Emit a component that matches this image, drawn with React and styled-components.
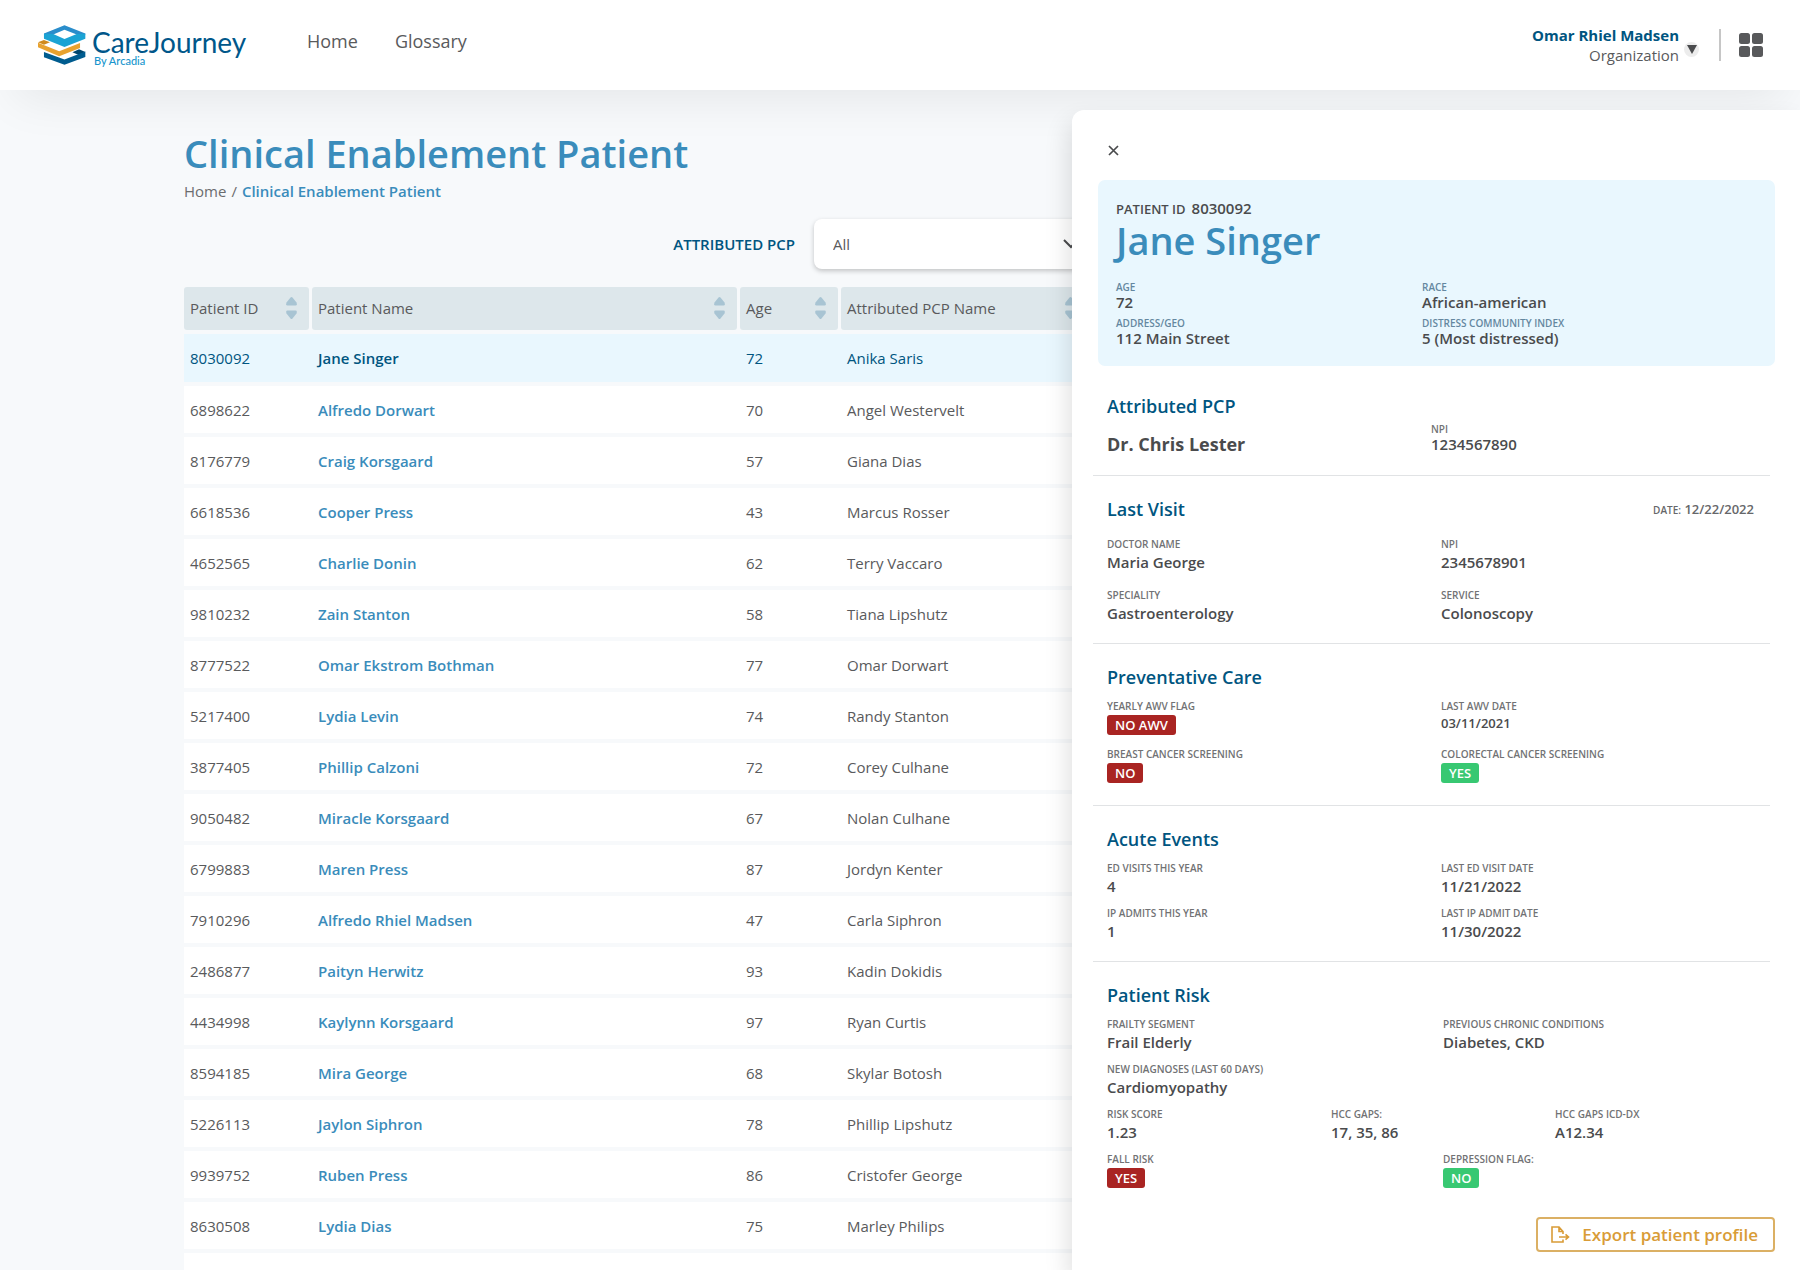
import React from "react";
import styled, { createGlobalStyle } from "styled-components";

const blue = "#3a8cbb";
const navy = "#005580";
const ink = "#4a4b4d";
const soft = "#595a5c";

const GlobalStyle = createGlobalStyle`
  *, *::before, *::after { box-sizing: border-box; }
  body { margin: 0; background: #f7f9fb; font-family: "Open Sans", "Noto Sans", sans-serif; color: ${soft}; }
  button, select { font: inherit; color: inherit; }
  h1, h2, h3, p, dl, dd { margin: 0; }
  a { color: inherit; text-decoration: none; }
`;

const Shell = styled.div`
  position: relative;
  height: 100vh;
  overflow: hidden;
  display: flex;
  flex-direction: column;
`;

const TopBar = styled.header`
  flex: none;
  height: 90px;
  padding: 0 37px 0 38px;
  display: flex;
  align-items: center;
  background: #fff;
  box-shadow: 0 24px 48px -16px rgba(0, 0, 0, 0.08);
`;

const Brand = styled.a`
  width: 212px;
  display: flex;
  align-items: center;
  gap: 6px;
`;

const BrandText = styled.span`
  padding-top: 5px;
  display: flex;
  flex-direction: column;
  font-family: Lato, sans-serif;
`;

const BrandName = styled.span`
  font-size: 28px;
  line-height: 26px;
  color: #00578a;
`;

const BrandBy = styled.span`
  padding-left: 2px;
  font-size: 11px;
  line-height: 12px;
  font-weight: 500;
  color: #1795cd;
`;

const Nav = styled.nav`
  flex: 1;
  padding: 0 0 8px 57px;
  display: flex;
  gap: 37px;
  font-size: 18px;
  line-height: 24px;
`;

const Account = styled.div`
  display: flex;
  align-items: center;
`;

const AccountText = styled.div`
  text-align: right;
  font-size: 15px;
  line-height: 20px;
`;

const AccountName = styled.div`
  font-weight: 700;
  color: ${navy};
`;

const AccountToggle = styled.button`
  width: 15px;
  height: 15px;
  margin: 8px 20px 0 5px;
  padding: 0;
  display: grid;
  place-items: center;
  border: 0;
  border-radius: 50%;
  background: #ececec;
`;

const AppsButton = styled.button`
  height: 32px;
  padding: 0 0 0 18px;
  display: flex;
  align-items: center;
  border: 0;
  border-left: 2px solid #c6c6c6;
  background: none;
`;

const Main = styled.main`
  padding: 39px 709px 0 184px;
`;

const PageTitle = styled.h1`
  font-size: 38px;
  line-height: 48px;
  font-weight: 600;
  color: ${blue};
`;

const Crumbs = styled.nav`
  display: flex;
  gap: 5px;
  font-size: 15px;
  line-height: 28px;
  color: #6b6c6e;
`;

const CrumbCurrent = styled.a`
  font-weight: 600;
  color: ${blue};
`;

const Filters = styled.div`
  padding: 14px 0;
  display: flex;
  justify-content: flex-end;
  align-items: center;
  gap: 19px;
`;

const FilterLabel = styled.label`
  font-size: 15px;
  line-height: 20px;
  font-weight: 600;
  color: ${navy};
`;

const SelectBox = styled.div`
  position: relative;
  svg {
    position: absolute;
    right: 12px;
    top: 20px;
    pointer-events: none;
  }
`;

const Select = styled.select`
  width: 277px;
  height: 50px;
  padding: 0 19px;
  appearance: none;
  border: 0;
  border-radius: 8px;
  background: #fff;
  box-shadow: 0 2px 5px rgba(0, 0, 0, 0.22);
  font-size: 15px;
`;

const Table = styled.table`
  width: 100%;
  table-layout: fixed;
  border-collapse: separate;
  border-spacing: 0 4px;
  font-size: 15px;
  line-height: 20px;
`;

const HeadCell = styled.th`
  width: ${(p) => p.$width || "auto"};
  padding: 0 3px 0 0;
  text-align: left;
  font-weight: 400;
`;

const SortButton = styled.button`
  width: 100%;
  height: 43px;
  padding: 0 12px 1px 6px;
  display: flex;
  align-items: center;
  justify-content: space-between;
  border: 0;
  border-radius: 3px;
  background: #dde7eb;
`;

const Row = styled.tr`
  height: ${(p) => (p.$active ? "48px" : "47px")};
  background: ${(p) => (p.$active ? "#e9f7fe" : "#fff")};
  color: ${(p) => (p.$active ? navy : "inherit")};
`;

const Cell = styled.td`
  padding: 0 6px;
`;

const PatientLink = styled.a`
  font-weight: 600;
  color: ${(p) => (p.$active ? navy : blue)};
`;

const Drawer = styled.aside`
  position: absolute;
  top: 110px;
  right: 0;
  bottom: 0;
  width: 728px;
  padding: 28px 25px 0 21px;
  background: #fff;
  border-radius: 12px 0 0 0;
  box-shadow: -4px 12px 24px rgba(0, 0, 0, 0.12);
`;

const CloseButton = styled.button`
  width: 24px;
  height: 24px;
  margin: 0 0 18px 8px;
  padding: 0;
  display: grid;
  place-items: center;
  border: 0;
  background: none;
`;

const Summary = styled.section`
  margin-left: 5px;
  padding: 18px 18px 19px;
  border-radius: 7px;
  background: #e9f7fe;
`;

const PatientId = styled.p`
  font-size: 15px;
  line-height: 21px;
  font-weight: 600;
  color: ${ink};
  small { margin-right: 6px; font-size: 13px; }
`;

const PatientName = styled.h2`
  font-size: 38px;
  line-height: 40px;
  font-weight: 600;
  color: ${blue};
`;

const SummaryGrid = styled.dl`
  padding-top: 20px;
  display: grid;
  grid-template-columns: 306px 1fr;
  row-gap: 5px;
`;

const Section = styled.section`
  padding: 21px 0 18px 14px;
`;

const LeadSection = styled(Section)`
  padding-top: 28px;
  padding-bottom: 22px;
`;

const FlagSection = styled(Section)`
  padding-bottom: 22px;
`;

const LastSection = styled(Section)`
  padding-bottom: 0;
`;

const SectionHead = styled.div`
  padding-right: 20px;
  display: flex;
  justify-content: space-between;
  align-items: center;
`;

const SectionTitle = styled.h3`
  font-size: 18px;
  line-height: 24px;
  font-weight: 600;
  color: ${navy};
`;

const Divider = styled.hr`
  height: 1px;
  margin: 0 5px 0 0;
  border: 0;
  background: #e1e3e5;
`;

const Fields = styled.dl`
  padding-top: ${(p) => p.$top || "10px"};
  display: grid;
  grid-template-columns: ${(p) => p.$cols || "1fr 1fr"};
  column-gap: ${(p) => p.$gap || "0"};
  row-gap: ${(p) => p.$rows || "8px"};
`;

const Term = styled.dt`
  font-size: 10px;
  line-height: 14px;
  font-weight: 600;
  color: ${(p) => (p.$tint ? "#6487a0" : "#717274")};
`;

const Value = styled.dd`
  font-size: 15px;
  line-height: ${(p) => (p.$tight ? "17px" : "23px")};
  font-weight: 600;
  color: ${ink};
`;

const DateValue = styled.dd`
  font-size: 13px;
  line-height: 20px;
  font-weight: 600;
  color: ${ink};
`;

const DoctorName = styled.p`
  align-self: end;
  font-size: 18px;
  line-height: 18px;
  font-weight: 700;
  color: ${ink};
`;

const LeadFields = styled.div`
  padding-top: 4px;
  display: grid;
  grid-template-columns: 324px 1fr;
`;

const VisitDate = styled.p`
  padding-right: 1px;
  font-size: 13px;
  line-height: 20px;
  font-weight: 600;
  color: #66676a;
  small { font-size: 10px; }
`;

const BadgeValue = styled.dd`
  padding-top: 2px;
  display: flex;
`;

const Badge = styled.span`
  padding: 0 8px;
  border-radius: 3px;
  background: ${(p) => (p.$good ? "#38c872" : "#a92422")};
  color: #fff;
  font-size: 13px;
  line-height: 20px;
  font-weight: 600;
`;

const DrawerFoot = styled.div`
  padding-top: 29px;
  display: flex;
  justify-content: flex-end;
`;

const ExportButton = styled.button`
  height: 35px;
  padding: 0 15px 0 13px;
  display: flex;
  align-items: center;
  gap: 12px;
  border: 2px solid #dbb064;
  border-radius: 4px;
  background: #fff;
  color: #d99c37;
  font-size: 17px;
  font-weight: 600;
`;

const LogoMark = () => (
  <svg width="48" height="40" viewBox="0 0 145 120" aria-hidden="true">
    <path d="M0 52 18 45 36 52 18 59Z" fill="#cf8a1d" />
    <path d="M104 82 124 73 143 81 123 90Z" fill="#00476f" />
    <path d="M18 81 80 104 143 80V96L80 120 18 97Z" fill="#005c8f" />
    <path d="M0 53 64 79 127 54V69L64 94 0 67Z" fill="#e8a22f" />
    <path d="M18 25 80 0 143 25V28H117L80 14 46 28H18Z" fill="#2a8dcb" />
    <path d="M18 26 46 27 80 42 117 27 143 26V41L80 66 18 41Z" fill="#1ba3d4" />
  </svg>
);

const SortIcon = () => (
  <svg width="11" height="22" viewBox="0 0 11 22" aria-hidden="true">
    <path d="M4.500 .6Q5.500 -.4 6.500 .6L10.500 5.500Q11.500 8.500 9.500 8.500H1.500Q-.5 8.500 .5 5.500Z" fill="#a8c4d3" />
    <path d="M4.500 21.400Q5.500 22.400 6.500 21.400L10.500 16.500Q11.500 13.500 9.500 13.500H1.500Q-.5 13.500 .5 16.500Z" fill="#a8c4d3" />
  </svg>
);

const patients = [
  ["8030092", "Jane Singer", "72", "Anika Saris"],
  ["6898622", "Alfredo Dorwart", "70", "Angel Westervelt"],
  ["8176779", "Craig Korsgaard", "57", "Giana Dias"],
  ["6618536", "Cooper Press", "43", "Marcus Rosser"],
  ["4652565", "Charlie Donin", "62", "Terry Vaccaro"],
  ["9810232", "Zain Stanton", "58", "Tiana Lipshutz"],
  ["8777522", "Omar Ekstrom Bothman", "77", "Omar Dorwart"],
  ["5217400", "Lydia Levin", "74", "Randy Stanton"],
  ["3877405", "Phillip Calzoni", "72", "Corey Culhane"],
  ["9050482", "Miracle Korsgaard", "67", "Nolan Culhane"],
  ["6799883", "Maren Press", "87", "Jordyn Kenter"],
  ["7910296", "Alfredo Rhiel Madsen", "47", "Carla Siphron"],
  ["2486877", "Paityn Herwitz", "93", "Kadin Dokidis"],
  ["4434998", "Kaylynn Korsgaard", "97", "Ryan Curtis"],
  ["8594185", "Mira George", "68", "Skylar Botosh"],
  ["5226113", "Jaylon Siphron", "78", "Phillip Lipshutz"],
  ["9939752", "Ruben Press", "86", "Cristofer George"],
  ["8630508", "Lydia Dias", "75", "Marley Philips"],
];

const columns = [
  ["Patient ID", "128px"],
  ["Patient Name", null],
  ["Age", "101px"],
  ["Attributed PCP Name", "250px"],
];

const Field = ({ label, tint, tight, children }) => (
  <div>
    <Term $tint={tint}>{label}</Term>
    <Value $tight={tight}>{children}</Value>
  </div>
);

const Flag = ({ label, good, children }) => (
  <div>
    <Term>{label}</Term>
    <BadgeValue><Badge $good={good}>{children}</Badge></BadgeValue>
  </div>
);

export default function App() {
  return (
    <Shell>
      <GlobalStyle />
      <TopBar>
        <Brand href="#home">
          <LogoMark />
          <BrandText>
            <BrandName>CareJourney</BrandName>
            <BrandBy>By Arcadia</BrandBy>
          </BrandText>
        </Brand>
        <Nav>
          <a href="#home">Home</a>
          <a href="#glossary">Glossary</a>
        </Nav>
        <Account>
          <AccountText>
            <AccountName>Omar Rhiel Madsen</AccountName>
            Organization
          </AccountText>
          <AccountToggle aria-label="Account menu">
            <svg width="10" height="9" viewBox="0 0 10 9"><path d="M0 0H10L5 9Z" fill={ink} /></svg>
          </AccountToggle>
          <AppsButton aria-label="Apps">
            <svg width="24" height="24" viewBox="0 0 24 24" fill="#58595b">
              <rect width="11" height="11" rx="2.500" />
              <rect x="13" width="11" height="11" rx="2.500" />
              <rect y="13" width="11" height="11" rx="2.500" />
              <rect x="13" y="13" width="11" height="11" rx="2.500" />
            </svg>
          </AppsButton>
        </Account>
      </TopBar>

      <Main>
        <PageTitle>Clinical Enablement Patient</PageTitle>
        <Crumbs aria-label="Breadcrumb">
          <a href="#home">Home</a>
          <span>/</span>
          <CrumbCurrent href="#patient">Clinical Enablement Patient</CrumbCurrent>
        </Crumbs>
        <Filters>
          <FilterLabel htmlFor="pcp">ATTRIBUTED PCP</FilterLabel>
          <SelectBox>
            <Select id="pcp" defaultValue="All">
              <option>All</option>
            </Select>
            <svg width="16" height="10" viewBox="0 0 16 10" fill="none" stroke={ink} strokeWidth="2">
              <path d="M1 1 8 8 15 1" />
            </svg>
          </SelectBox>
        </Filters>
        <Table>
          <thead>
            <tr>
              {columns.map(([name, width]) => (
                <HeadCell key={name} $width={width} scope="col">
                  <SortButton>{name}<SortIcon /></SortButton>
                </HeadCell>
              ))}
            </tr>
          </thead>
          <tbody>
            {patients.map(([id, name, age, pcp], i) => (
              <Row key={id} $active={i === 0}>
                <Cell>{id}</Cell>
                <Cell><PatientLink href={"#" + id} $active={i === 0}>{name}</PatientLink></Cell>
                <Cell>{age}</Cell>
                <Cell>{pcp}</Cell>
              </Row>
            ))}
            <Row><Cell colSpan={4} /></Row>
          </tbody>
        </Table>
      </Main>

      <Drawer aria-label="Patient profile">
        <CloseButton aria-label="Close">
          <svg width="11" height="11" viewBox="0 0 11 11" stroke={ink} strokeWidth="1.700">
            <path d="M1 1 10 10M10 1 1 10" />
          </svg>
        </CloseButton>
        <Summary>
          <PatientId><small>PATIENT ID</small>8030092</PatientId>
          <PatientName>Jane Singer</PatientName>
          <SummaryGrid>
            <Field tint tight label="AGE">72</Field>
            <Field tint tight label="RACE">African-american</Field>
            <Field tint tight label="ADDRESS/GEO">112 Main Street</Field>
            <Field tint tight label="DISTRESS COMMUNITY INDEX">5 (Most distressed)</Field>
          </SummaryGrid>
        </Summary>

        <LeadSection>
          <SectionTitle>Attributed PCP</SectionTitle>
          <LeadFields>
            <DoctorName>Dr. Chris Lester</DoctorName>
            <dl><Field tight label="NPI">1234567890</Field></dl>
          </LeadFields>
        </LeadSection>
        <Divider />
        <Section>
          <SectionHead>
            <SectionTitle>Last Visit</SectionTitle>
            <VisitDate><small>DATE:</small> 12/22/2022</VisitDate>
          </SectionHead>
          <Fields $top="16px" $rows="14px">
            <Field label="DOCTOR NAME">Maria George</Field>
            <Field label="NPI">2345678901</Field>
            <Field label="SPECIALITY">Gastroenterology</Field>
            <Field label="SERVICE">Colonoscopy</Field>
          </Fields>
        </Section>
        <Divider />
        <FlagSection>
          <SectionTitle>Preventative Care</SectionTitle>
          <Fields $rows="12px">
            <Flag label="YEARLY AWV FLAG">NO AWV</Flag>
            <div>
              <Term>LAST AWV DATE</Term>
              <DateValue>03/11/2021</DateValue>
            </div>
            <Flag label="BREAST CANCER SCREENING">NO</Flag>
            <Flag good label="COLORECTAL CANCER SCREENING">YES</Flag>
          </Fields>
        </FlagSection>
        <Divider />
        <Section>
          <SectionTitle>Acute Events</SectionTitle>
          <Fields>
            <Field label="ED VISITS THIS YEAR">4</Field>
            <Field label="LAST ED VISIT DATE">11/21/2022</Field>
            <Field label="IP ADMITS THIS YEAR">1</Field>
            <Field label="LAST IP ADMIT DATE">11/30/2022</Field>
          </Fields>
        </Section>
        <Divider />
        <LastSection>
          <SectionTitle>Patient Risk</SectionTitle>
          <Fields $gap="4px">
            <Field label="FRAILTY SEGMENT">Frail Elderly</Field>
            <Field label="PREVIOUS CHRONIC CONDITIONS">Diabetes, CKD</Field>
            <Field label="NEW DIAGNOSES (LAST 60 DAYS)">Cardiomyopathy</Field>
          </Fields>
          <Fields $cols="1fr 1fr 1fr" $gap="4px" $top="8px">
            <Field label="RISK SCORE">1.23</Field>
            <Field label="HCC GAPS:">17, 35, 86</Field>
            <Field label="HCC GAPS ICD-DX">A12.34</Field>
          </Fields>
          <Fields $gap="4px" $top="8px">
            <Flag label="FALL RISK">YES</Flag>
            <Flag good label="DEPRESSION FLAG:">NO</Flag>
          </Fields>
        </LastSection>
        <DrawerFoot>
          <ExportButton>
            <svg width="19" height="17" viewBox="0 0 19 17" fill="none" stroke="currentColor" strokeWidth="1.600">
              <path d="M12 13.500V16H1V1H8L12 5.500V8M8 1V5.500H12M8 11H17.500M14.500 8.300 17.500 11 14.500 13.700" />
            </svg>
            Export patient profile
          </ExportButton>
        </DrawerFoot>
      </Drawer>
    </Shell>
  );
}
